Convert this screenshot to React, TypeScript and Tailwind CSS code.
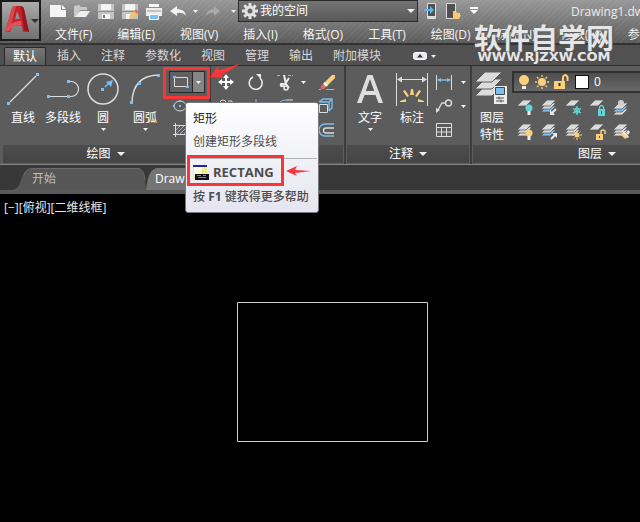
import React from 'react';

type IconProps = { w: number; h: number; children: React.ReactNode; className?: string };

const BLUE = '#78c0f5';
const GOLD = '#fbd07c';
const TEAL = '#5fd6da';
const PALE = '#dcdcdc';

function Icon({ w, h, children, className = '' }: IconProps) {
  return (
    <svg width={w} height={h} viewBox={`0 0 ${w} ${h}`} fill="none" aria-hidden="true" className={`block shrink-0 ${className}`}>
      {children}
    </svg>
  );
}

function Caret({ small = false, className = '' }: { small?: boolean; className?: string }) {
  return small ? (
    <Icon w={5} h={3} className={className}><path d="M0 0h5L2.5 3z" fill="#f2f2f2" /></Icon>
  ) : (
    <Icon w={8} h={4} className={className}><path d="M0 0h8L4 4z" fill="#f2f2f2" /></Icon>
  );
}

/* ---------- title bar ---------- */

function QuickAccess() {
  return (
    <div className="flex w-[188px] shrink-0 items-center">
      <button aria-label="新建" className="flex w-6 justify-start">
        <Icon w={17} h={16}><path d="M0 2h11v5h5v7H0z" fill="#f4f4f4" /><path d="M12 2l4 4h-4z" fill="#fff" /></Icon>
      </button>
      <button aria-label="打开" className="flex w-6 justify-start">
        <Icon w={17} h={16}><path d="M0 14V3l5-1 2 2h6v3H6L2 14z" fill="#c9c9c9" /><path d="M6 8h10l-4 6H1z" fill="#eee" /></Icon>
      </button>
      <button aria-label="保存" className="flex w-6 justify-start">
        <Icon w={17} h={17}><path d="M0 1h16v15H0z" fill="#c4c4c4" /><path d="M3 1h10v6H3zM4 11h8v5H4z" fill="#f4f4f4" /><path d="M0 8.500h16" stroke="#8d8d8d" /><path d="M6 12v3" stroke="#777" strokeWidth="2" /></Icon>
      </button>
      <button aria-label="另存为" className="flex w-6 justify-start">
        <Icon w={17} h={17}><path d="M0 1h16v15H0z" fill="#c4c4c4" /><path d="M3 1h10v6H3zM4 11h5v5H4z" fill="#f4f4f4" /><path d="M0 8.500h16" stroke="#8d8d8d" /><path d="M7 16l1-4 4-4 3 3-4 4z" fill="#f4c566" /><path d="M12 8l2-2 3 3-2 2z" fill="#e8706a" /></Icon>
      </button>
      <button aria-label="打印" className="flex w-6 justify-start">
        <Icon w={17} h={17}><path d="M3 1h10v3H3z" fill="#f7f7f7" /><path d="M0 5h16v8H0z" fill="#eee" /><path d="M1 8h14" stroke="#9a9a9a" /><path d="M3.500 11.500h9v5h-9z" fill={BLUE} stroke="#fff" /></Icon>
      </button>
      <button aria-label="放弃" className="flex w-9 items-center gap-[6px]">
        <Icon w={17} h={13}><path d="M0 6l7-5v3q8 0 9 7-3-4-9-3v3z" fill="#f2f2f2" /></Icon>
        <Caret small />
      </button>
      <button aria-label="重做" className="flex items-center gap-[11px]">
        <Icon w={14} h={13}><path d="M14 6L8 1v3Q1 4 0 11q3-4 8-3v3z" fill="#aaa" /></Icon>
        <Caret small />
      </button>
    </div>
  );
}

function Workspace() {
  return (
    <label className="relative flex h-[22px] w-[180px] shrink-0 items-center border border-[#2c2c2c] bg-linear-to-b from-[#747474] to-[#595959] pl-[2px]">
      <Icon w={18} h={18}>
        <circle cx="9" cy="9" r="4" stroke="#e2e2e2" strokeWidth="3" />
        <path d="M9 1v3M9 14v3M1 9h3M14 9h3M3.300 3.300l2.200 2.200M12.500 12.500l2.200 2.200M3.300 14.700l2.200-2.200M12.500 5.500l2.200-2.200" stroke="#e2e2e2" strokeWidth="3" />
      </Icon>
      <select aria-label="工作空间" className="h-full min-w-0 flex-1 appearance-none bg-transparent pl-[1px] text-white outline-none">
        <option>我的空间</option>
      </select>
      <Caret className="mr-[2px]" />
    </label>
  );
}

const menus = ['文件(F)', '编辑(E)', '视图(V)', '插入(I)', '格式(O)', '工具(T)', '绘图(D)', '标注(N)', '修改(M)', '参数(P)'];

function Header() {
  return (
    <header className="flex h-[45px] overflow-hidden border-b-2 border-[#333] bg-[repeating-linear-gradient(135deg,rgba(255,255,255,0.05)_0px,rgba(255,255,255,0.05)_1px,transparent_1px,transparent_4px),linear-gradient(to_bottom,#989898,#5c5c5c)]">
      <button aria-label="应用程序菜单" className="flex h-[41px] w-[41px] shrink-0 items-center border-2 border-[#1c1c1c] bg-linear-to-b from-[#ababab] to-[#717171] pl-[2px]">
        <Icon w={27} h={34}>
          <path d="M1 28L8 4q1-2 4-2h4q3 0 4 3l5 23h-6l-1-6q-6-2-10 1l-2 5z" fill="#c3222b" />
          <path d="M8 4q1-2 4-2L7 22l-6 6z" fill="#e0444b" />
          <path d="M17 2q3 1 3 3l5 23-5-2z" fill="#98161f" />
          <path d="M11 16l2-9 3 8q-3-1-5 1z" fill="#8f8f8f" />
          <path d="M1 28Q7 16 17 17l1 4Q9 20 5 27z" fill="#e0515a" />
        </Icon>
        <Icon w={8} h={4}><path d="M0 0h8L4 4z" fill="#28323c" /></Icon>
      </button>
      <div className="min-w-0 flex-1">
        <div className="flex h-[22px] pl-[9px]">
          <QuickAccess />
          <Workspace />
          <div className="flex shrink-0 items-center gap-2 pl-[6px]">
            <button aria-label="发送到移动设备"><Icon w={14} h={18}><path d="M3.500 1.500h8v15h-8z" fill="#505050" stroke="#ddd" /><path d="M4 14h8v2H4z" fill="#ddd" /><path d="M0 7h6v-3l4 4-4 4V9H0z" fill="#5db7f3" /></Icon></button>
            <button aria-label="从移动设备打开"><Icon w={16} h={18}><path d="M.5 1.500h9v15h-9z" fill="#505050" stroke="#ddd" /><path d="M7 17V9h3l1 2h3v2h1l-2 4z" fill="#f6cb73" /></Icon></button>
            <button aria-label="自定义"><Icon w={8} h={8}><path d="M0 1h8" stroke="#fff" strokeWidth="2" /><path d="M0 3h8L4 7z" fill="#fff" /></Icon></button>
          </div>
          <h1 className="ml-[93px] shrink-0 leading-[24px] font-normal whitespace-nowrap text-[#ececec]">Drawing1.dwg</h1>
        </div>
        <nav className="flex h-[22px] items-end gap-[25px] pl-[14px]">
          {menus.map((m) => (
            <button key={m} className="shrink-0 leading-[18px] text-[#f5f5f5]">{m}</button>
          ))}
        </nav>
      </div>
    </header>
  );
}

function RibbonTabs() {
  return (
    <nav className="flex h-5 items-end bg-[#515151] pl-1">
      <button className="h-[18px] w-[42px] shrink-0 rounded-t-[2px] border border-b-0 border-[#292929] bg-linear-to-b from-[#777] to-[#5d5d5d] leading-[17px] text-white">默认</button>
      <div className="flex h-[18px] items-center gap-5 pl-[11px] text-[#d8d8d8]">
        {['插入', '注释', '参数化', '视图', '管理', '输出', '附加模块'].map((t) => (
          <button key={t} className="shrink-0 leading-[18px]">{t}</button>
        ))}
      </div>
      <button aria-label="最小化功能区" className="flex h-[18px] items-center gap-1 pl-8">
        <Icon w={14} h={8}><rect x=".5" y=".5" width="13" height="7" rx="2" fill="#e8e8ee" stroke="#fff" /><path d="M4 5.500h6L7 2z" fill="#333" /></Icon>
        <Caret small />
      </button>
    </nav>
  );
}

/* ---------- ribbon ---------- */

function Tool({ label, icon, width, caret }: { label: string; icon: React.ReactNode; width: string; caret?: boolean }) {
  return (
    <button className={`flex shrink-0 flex-col items-center pt-[6px] text-white ${width}`}>
      <span className="flex h-[34px] items-center">{icon}</span>
      <span className="mt-[3px] leading-[17px] whitespace-pre-line">{label}</span>
      {caret && <Caret small className="mt-[2px]" />}
    </button>
  );
}

function Panel({ title, width, children }: { title: string; width: string; children: React.ReactNode }) {
  return (
    <section className={`flex flex-col border-r-2 border-[#3d3d3d] ${width}`}>
      <div className="flex h-[79px] overflow-hidden">{children}</div>
      <button className="mx-px flex h-[18px] items-center justify-center gap-[6px] bg-linear-to-b from-[#4c4c4c] to-[#454545] leading-[18px] text-white">
        {title}<Caret />
      </button>
    </section>
  );
}

const P = ({ x, y }: { x: number; y: number }) => <path d={`M${x} ${y}h3v3h-3z`} fill={BLUE} />;

const lineIcon = <Icon w={32} h={32}><path d="M3 29L29 3" stroke={PALE} strokeWidth="1.300" /><P x={0} y={29} /><P x={29} y={0} /></Icon>;
const polyIcon = <Icon w={33} h={32}><path d="M2 23.500h20M22 8.500h2a7.500 7.500 0 010 15h-2" stroke={PALE} strokeWidth="1.200" /><P x={0} y={22} /><P x={20} y={22} /><P x={20} y={7} /></Icon>;
const circleIcon = <Icon w={32} h={32}><circle cx="16" cy="16" r="15" stroke={PALE} strokeWidth="1.500" /><P x={14} y={15} /><path d="M18 14l4-4" stroke={BLUE} strokeWidth="1.500" /><path d="M19 9l7-2-2 7z" fill={BLUE} /></Icon>;
const arcIcon = <Icon w={30} h={32}><path d="M2 29Q3 3 28 2" stroke={PALE} strokeWidth="1.400" /><P x={0} y={28} /><P x={8} y={9} /><P x={27} y={1} /></Icon>;

function DrawPanel() {
  return (
    <Panel title="绘图" width="w-[209px] shrink-0">
      <Tool label="直线" width="w-[42px]" icon={lineIcon} />
      <Tool label="多段线" width="w-[38px]" icon={polyIcon} />
      <Tool label="圆" width="w-[42px]" icon={circleIcon} caret />
      <Tool label="圆弧" width="w-[42px]" icon={arcIcon} caret />
      <div className="flex flex-col items-start gap-[7px] pt-[5px] pl-[3px]">
        <button aria-label="矩形" className="flex h-[22px] w-9 items-center border border-[#292929] bg-[#606060]">
          <span className="flex h-full w-[23px] items-center justify-center border-r border-[#292929]">
            <Icon w={16} h={14}><path d="M1.500 2.500h13v9h-13z" stroke={PALE} /><path d="M0 1h3v2H0zM13 11h3v2h-3z" fill={BLUE} /></Icon>
          </span>
          <span className="flex h-full flex-1 items-center justify-center bg-[#858585]"><Caret small /></span>
        </button>
        <button aria-label="椭圆" className="pl-1"><Icon w={14} h={12}><ellipse cx="7" cy="6" rx="6" ry="5" stroke={PALE} /><path d="M6 0h2v2H6zM6 5h2v2H6zM0 5h2v2H0z" fill={BLUE} /></Icon></button>
        <button aria-label="图案填充" className="pt-1 pl-1"><Icon w={16} h={14}><path d="M2.500 0v14M0 2.500h16M14.500 0v14M0 11.500h16" stroke={PALE} /><path d="M3 11l8-8M7 11l7-7M3 7l4-4M11 11l3-3" stroke={BLUE} /></Icon></button>
      </div>
    </Panel>
  );
}

const cell = 'flex h-6 w-[30px] items-center justify-center';

function ModifyPanel() {
  return (
    <Panel title="修改" width="w-[135px] shrink-0">
      <div className="grid h-[72px] grid-cols-[30px_30px_40px_30px] pt-1">
        <button aria-label="移动" className={cell}><Icon w={16} h={16}><path d="M8 2v12M2 8h12" stroke="#fff" strokeWidth="2" /><path d="M8 0l3 4H5zM8 16l3-4H5zM0 8l4-3v6zM16 8l-4-3v6z" fill="#fff" /></Icon></button>
        <button aria-label="旋转" className={cell}><Icon w={16} h={16}><path d="M5 3a6.500 6.500 0 107 1" stroke="#eee" strokeWidth="1.500" /><path d="M8 0h5v5z" fill="#eee" /></Icon></button>
        <button aria-label="修剪" className="flex h-6 items-center justify-center gap-2"><Icon w={16} h={17}><path d="M0 1.500h4M11 1.500h5" stroke={BLUE} strokeDasharray="3 1" /><path d="M7 1l2 9 3 4M12 4L8 10l-5 1" stroke="#eee" strokeWidth="2" /><circle cx="5" cy="11" r="1.500" stroke="#eee" strokeWidth="1.500" /><circle cx="9" cy="14" r="2" stroke="#eee" strokeWidth="1.500" /></Icon><Caret small /></button>
        <button aria-label="删除" className={cell}><Icon w={17} h={17}><path d="M6 9l8-8h3v3l-8 8z" fill={GOLD} /><path d="M5 10l2-2 3 3-2 2z" fill="#fff" /><path d="M5 10l3 3-2 2H3v-3z" fill="#ef6561" /><path d="M1 15.500h2M8 15.500h8" stroke={BLUE} /></Icon></button>
        <button aria-label="复制" className={cell}><Icon w={14} h={14}><circle cx="4" cy="4" r="3" stroke={PALE} /><circle cx="10" cy="10" r="3" stroke={PALE} /><path d="M9 2h4v4" stroke={PALE} /></Icon></button>
        <button aria-label="镜像" className={cell}><Icon w={14} h={14}><path d="M7 0v14" stroke={BLUE} /><path d="M5 3v9H0zM9 3v9h5z" stroke={PALE} /></Icon></button>
        <button aria-label="圆角" className="flex h-6 items-center justify-center gap-2"><Icon w={16} h={14}><path d="M1 13V9q0-8 8-8" stroke={BLUE} /><path d="M9 1h7" stroke={PALE} /></Icon><Caret small /></button>
        <button aria-label="分解" className={cell}><Icon w={16} h={16}><path d="M1.500 6.500h8v8h-8z" stroke={PALE} /><path d="M1 4l4-3h9v9l-3 3M11 4l3-3M2 4h9v9" stroke={BLUE} strokeWidth="1.300" /></Icon></button>
        <button aria-label="拉伸" className={cell}><Icon w={14} h={14}><path d="M1 4h8v9H1z" stroke={PALE} /></Icon></button>
        <button aria-label="缩放" className={cell}><Icon w={14} h={14}><path d="M1 1h12v12H1z" stroke={PALE} /></Icon></button>
        <button aria-label="阵列" className="flex h-6 items-center justify-center"><Icon w={14} h={14}><path d="M1 1h4v4H1zM8 1h4v4H8zM1 8h4v4H1z" stroke={BLUE} /></Icon></button>
        <button aria-label="偏移" className={cell}><Icon w={16} h={14}><path d="M16 1H7a6 6 0 000 12h9" stroke={BLUE} strokeWidth="1.300" /><path d="M16 5H8a2.500 2.500 0 000 5h8" stroke={PALE} strokeWidth="1.300" /></Icon></button>
      </div>
    </Panel>
  );
}

function AnnotatePanel() {
  return (
    <Panel title="注释" width="w-[126px] shrink-0">
      <Tool label="文字" width="w-12" caret icon={<Icon w={26} h={30}><path d="M0 29L10.500 1h5L26 29h-4.500l-3-8h-11l-3 8zM8.800 17h8.400L13 5z" fill="#dedede" fillRule="evenodd" /></Icon>} />
      <Tool label="标注" width="w-9" icon={
        <Icon w={32} h={33}>
          <path d="M.5 0v33M31.500 0v33M2 6.500h28" stroke={PALE} />
          <path d="M1 6.500l5-3v6zM31 6.500l-5-3v6z" fill={PALE} />
          <path d="M15 16h2l1 6h-4zM7 18l2-1 4 6-2 1zM25 18l-2-1-4 6 2 1zM4 28l6-2v3H4zM28 28l-6-2v3h6z" fill={GOLD} />
        </Icon>} />
      <div className="grid grid-cols-[24px_8px] items-center justify-items-center gap-x-[3px] pt-1 pl-[2px] [grid-auto-rows:24px]">
        <button aria-label="线性标注"><Icon w={16} h={15}><path d="M.5 0v15M15.500 0v15" stroke={PALE} /><path d="M2 5h12" stroke={BLUE} strokeWidth="1.400" /><path d="M1 5l4-2v4zM15 5l-4-2v4z" fill={BLUE} /></Icon></button>
        <Caret small />
        <button aria-label="引线"><Icon w={17} h={15}><circle cx="12.500" cy="4" r="3" stroke={PALE} strokeWidth="1.400" /><path d="M9 4H6L2 11" stroke={PALE} strokeWidth="1.300" /><path d="M0 14V9l4 2z" fill={PALE} /></Icon></button>
        <Caret small />
        <button aria-label="表格"><Icon w={16} h={14}><path d="M.5.5h15v13H.5zM0 4.500h16M0 9h16M5.500 4v10M10.500 4v10" stroke={PALE} /></Icon></button>
      </div>
    </Panel>
  );
}

function Sheets({ n = 3, blue }: { n?: number; blue?: number }) {
  return (
    <>
      {Array.from({ length: n }, (_, i) => (
        <path key={i} d={`M0 ${7 + i * 3}L6 ${1 + i * 3}h9L9 ${7 + i * 3}z`} fill={i === blue ? BLUE : '#dadada'} stroke="#5c5c5c" strokeWidth="0.800" />
      )).reverse()}
    </>
  );
}

const sun = <><circle cx="12" cy="12" r="2.500" fill={GOLD} /><path d="M12 7v2M12 15v2M7 12h2M15 12h2M8.500 8.500l1 1M14.500 14.500l1 1M8.500 15.500l1-1M14.500 9.500l1-1" stroke={GOLD} /></>;
const layerTools: [string, React.ReactNode][] = [
  ['关闭图层', <><Sheets n={1} /><circle cx="12" cy="9" r="3.500" fill={TEAL} /><path d="M12 12v4" stroke="#eee" strokeWidth="3" /></>],
  ['隔离图层', <><Sheets blue={2} /><path d="M15 10l-4 4" stroke="#eee" strokeWidth="2" /><path d="M9 11v5h5z" fill="#eee" /></>],
  ['冻结图层', <><Sheets n={1} /><path d="M12 7v9M8 9.500l8 4.500M8 14l8-4.500" stroke={TEAL} strokeWidth="1.400" /><circle cx="12" cy="11.700" r="2.600" stroke={TEAL} /></>],
  ['锁定图层', <><Sheets n={1} /><path d="M9 10h7v7H9z" fill={TEAL} /><path d="M10.500 10V8q2-3 4 0v2" stroke={TEAL} strokeWidth="1.300" /><path d="M12.500 12v3" stroke="#555" /></>],
  ['置为当前', <><g transform="translate(0 3)"><Sheets blue={1} /></g><circle cx="8" cy="4" r="3" fill="#cfcfcf" /></>],
  ['打开图层', <><Sheets /><circle cx="12" cy="10" r="3.500" fill={GOLD} /><path d="M12 13v4" stroke="#eee" strokeWidth="3" /></>],
  ['取消隔离', <><Sheets blue={2} /><path d="M10 16l4-4" stroke="#eee" strokeWidth="2" /><path d="M11 10h5v5z" fill="#eee" /></>],
  ['解冻图层', <><Sheets />{sun}</>],
  ['解锁图层', <><Sheets n={1} /><path d="M7 11h7v6H7z" fill={GOLD} /><path d="M12 11V8q2-2 4 0v3" stroke={GOLD} strokeWidth="1.500" /><path d="M10.500 13v2" stroke="#555" /></>],
  ['匹配图层', <><Sheets /><path d="M7 11l4-2 4 5-3 2z" fill={GOLD} /><path d="M9 9l2-1 5 6-1 1zM13 10l2-3 2 2-2 3z" fill="#eee" /></>],
];

function LayerPanel() {
  return (
    <Panel title="图层" width="min-w-[252px] flex-1">
      <Tool label={'图层\n特性'} width="w-[40px]" icon={
        <Icon w={34} h={34}>
          {[14, 7, 0].map((y) => <path key={y} d={`M0 ${y + 10}L10 ${y}h17L17 ${y + 10}z`} fill="#dcdcdc" stroke="#5c5c5c" />)}
          <path d="M19 14h13v18H19z" fill="#eee" /><path d="M20.500 15.500h9v7h-9z" fill={BLUE} stroke="#444" />
          <path d="M21 26h8M21 29h8M24 24.500v3M26 27.500v3" stroke="#555" />
        </Icon>} />
      <div className="flex min-w-0 flex-1 flex-col pt-[5px]">
        <label className="flex h-[22px] items-center border-2 border-r-0 border-[#323232] bg-linear-to-b from-[#4d4d4d] to-[#696969] pl-1">
          <Icon w={14} h={16}><circle cx="6" cy="6" r="5" fill={GOLD} /><path d="M4 10h4v1H4z" fill={GOLD} /><path d="M4 12h4v3H4z" fill="#eee" /></Icon>
          <Icon w={20} h={16} className="ml-[2px]"><circle cx="8" cy="8" r="4" fill={GOLD} /><path d="M8 1v2M8 13v2M1 8h2M13 8h2M3 3l1.500 1.500M11.500 11.500L13 13M3 13l1.500-1.500M11.500 4.500L13 3" stroke={GOLD} strokeWidth="1.300" /></Icon>
          <Icon w={16} h={16}><path d="M0 7h11v8H0z" fill={GOLD} /><path d="M9 7V3q2-4 4.500 0v4" stroke={GOLD} strokeWidth="2" /><path d="M5.500 9v3" stroke="#333" strokeWidth="2" /></Icon>
          <span className="ml-[5px] h-[14px] w-[14px] shrink-0 border border-[#111] bg-white" />
          <select aria-label="当前图层" className="ml-[5px] min-w-0 flex-1 appearance-none bg-transparent leading-[18px] text-white outline-none"><option>0</option></select>
        </label>
        <div className="grid grid-cols-[repeat(5,24px)] pt-[3px] pl-[2px] [grid-auto-rows:24px]">
          {layerTools.map(([name, drawing]) => (
            <button key={name} aria-label={name} className="flex items-center justify-center"><Icon w={18} h={18}>{drawing}</Icon></button>
          ))}
        </div>
      </div>
    </Panel>
  );
}

function Tooltip() {
  return (
    <div role="tooltip" className="absolute top-[102px] left-[185px] w-[134px] rounded-[3px] border border-[#77777c] bg-linear-to-b from-white to-[#e4e5f0] pb-[5px] text-[#4c4c4c]">
      <p className="px-[7px] pt-[6px] leading-5 text-[#222]">矩形</p>
      <p className="px-[7px] pt-[3px] leading-5">创建矩形多段线</p>
      <hr className="mx-px mt-[6px] border-[#b4b4b8]" />
      <p className="flex h-7 items-center gap-1 px-[7px] text-[13px] font-bold">
        <Icon w={16} h={16}><path d="M0 0h14v14H0z" fill="#f0ec94" /><path d="M1 2h8v8H1z" fill="#fffde0" /><path d="M0 1h14" stroke="#1c2b9c" strokeWidth="2" /><path d="M2 9h14v6H2z" fill="#101018" /><path d="M4 10.500h4M10 10.500h3M5 12.500h8" stroke="#888" /></Icon>
        RECTANG
      </p>
      <p className="px-[7px] leading-5 font-medium whitespace-nowrap">按 <b>F1</b> 键获得更多帮助</p>
    </div>
  );
}

function DocumentTabs() {
  return (
    <div className="flex h-[29px] items-end border-b-4 border-[#5a5a5a] bg-[#383838] pl-3">
      <button className="relative h-[22px] w-[134px] shrink-0 pl-5 text-left leading-[22px] text-[#bdbdbd]">
        <Icon w={134} h={22} className="absolute inset-0"><path d="M0 22Q7 21 9 12T20 0h106q6 0 8 22z" fill="#565656" /><path d="M12 7Q14 .5 20 .5h106q6 0 7 12" stroke="#6b6b6b" /></Icon>
        <span className="relative">开始</span>
      </button>
      <button className="relative h-[22px] w-[134px] shrink-0 pl-[9px] text-left leading-[22px] text-white">
        <Icon w={134} h={22} className="absolute inset-0"><path d="M0 22Q2 0 12 0h110q8 2 12 22z" fill="#747474" /></Icon>
        <span className="relative">Drawing1*</span>
      </button>
    </div>
  );
}

export default function App() {
  return (
    <div className="relative flex h-screen flex-col overflow-hidden bg-black font-['Open_Sans','Noto_Sans_CJK_SC',sans-serif] text-[12px]">
      <Header />
      <RibbonTabs />
      <main className="flex h-[100px] shrink-0 overflow-hidden border-t border-b border-t-[#2d2d2d] border-b-[#858585] bg-[#5c5c5c] pl-[2px]">
        <DrawPanel />
        <ModifyPanel />
        <AnnotatePanel />
        <LayerPanel />
      </main>
      <DocumentTabs />
      <div className="relative min-h-0 flex-1 bg-black px-1 pt-1">
        <p className="leading-5 text-[#e8e8e8]">[−][俯视][二维线框]</p>
        <Icon w={191} h={140} className="absolute top-[108px] left-[237px]"><path d="M.5.5h190v139H.5z" stroke="#d0d0d0" /></Icon>
      </div>

      <Tooltip />
      <div className="absolute top-[67px] left-[163px] h-[32px] w-[47px] border-[3px] border-[#f93636]" />
      <div className="absolute top-[155px] left-[187px] h-[31px] w-[97px] border-[3px] border-[#f93636]" />
      <Icon w={32} h={16} className="absolute top-[63px] left-[210px]"><path d="M0 14L8 3l1 4Q19 5 31 0 22 7 11 12l3 3z" fill="#f93636" /></Icon>
      <Icon w={26} h={10} className="absolute top-[166px] left-[286px]"><path d="M0 5L11 0 9 4l16 1-16 2 2 3z" fill="#f93636" /></Icon>
      <div className="absolute top-[24px] left-[474px] flex flex-col items-center whitespace-nowrap text-[#e6e6e6] [text-shadow:1px_1px_1px_#555]">
        <span className="text-[28px] leading-[28px] font-bold">软件自学网</span>
        <span className="font-['DejaVu_Sans',sans-serif] text-[13px] leading-[10px] font-bold">WWW.RJZXW.COM</span>
      </div>
    </div>
  );
}
